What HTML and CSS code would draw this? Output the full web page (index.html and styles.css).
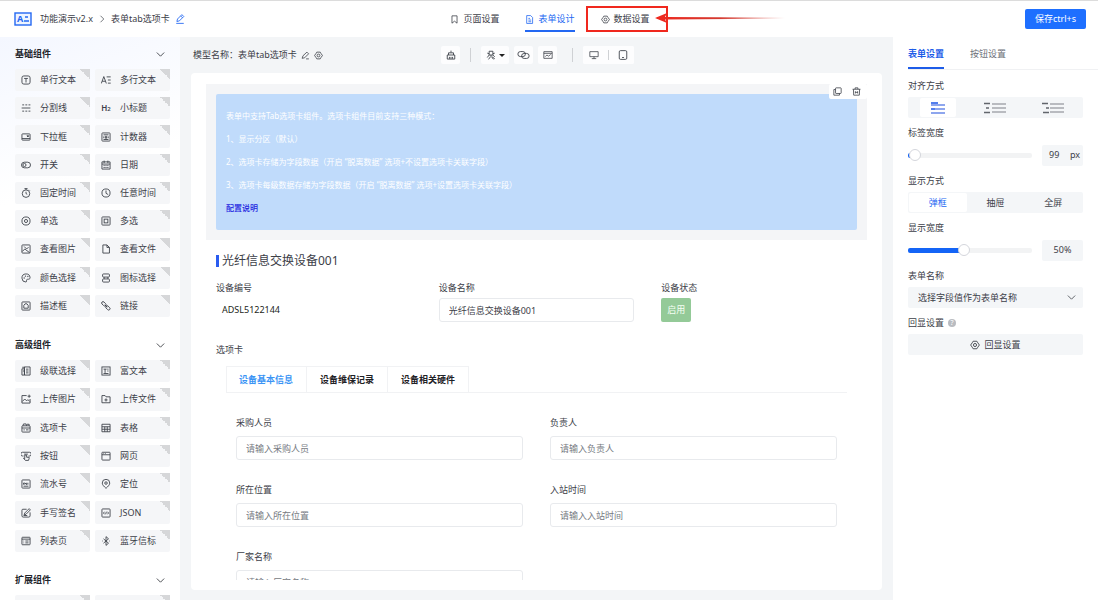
FILE: index.html
```html
<!DOCTYPE html>
<html lang="zh-CN">

<head>
    <meta charset="UTF-8">
    <meta name="viewport" content="width=device-width, initial-scale=1.0">
    <title>表单设计</title>
    <link rel="stylesheet" href="styles.css">
</head>

<body>
    <!-- Icon set -->
    <svg class="sprite" aria-hidden="true">
        <symbol id="i-edit" viewBox="0 0 16 16"><path d="M3 12l1-4 7-7 3 3-7 7-4 1zM9 3l3 3M2 15h12"/></symbol>
        <symbol id="i-pen" viewBox="0 0 16 16"><path d="M2 13l1.500-4.500L10.500 2l3 3-7 7L2 13zM9 14h5"/></symbol>
        <symbol id="i-gear" viewBox="0 0 16 16"><path d="M5 2h6l1.500 2.500L15 8l-2.500 3.500L11 14H5l-1.500-2.500L1 8l2.500-3.500z"/><circle cx="8" cy="8" r="2.500"/></symbol>
        <symbol id="i-bookmark" viewBox="0 0 16 16"><path d="M3.500 1.500h9v13L8 11l-4.500 3.500z"/></symbol>
        <symbol id="i-doc" viewBox="0 0 16 16"><path d="M3 1h7l3.500 3.500V15H3zM6 6h3M6 9h5M6 12h5"/></symbol>
        <symbol id="i-down" viewBox="0 0 16 16"><path d="M1.500 4.500L8 11l6.500-6.500"/></symbol>
        <symbol id="i-right" viewBox="0 0 16 16"><path d="M5 1.500L11.500 8 5 14.500"/></symbol>
        <symbol id="i-text" viewBox="0 0 16 16"><rect x="1.500" y="1.500" width="13" height="13" rx="3"/><path d="M5 5.500h6M8 5.500v6.500"/></symbol>
        <symbol id="i-textarea" viewBox="0 0 16 16"><path d="M0.500 13.500L4.500 2.500l4 11M2 10h5M9 3h6.500M11 8h4.500M11 13h4.500"/></symbol>
        <symbol id="i-divider" viewBox="0 0 16 16"><path d="M1 8h14M2 3h3M7 3h3M12 3h3M2 13h3M7 13h3M12 13h3"/></symbol>
        <symbol id="i-select" viewBox="0 0 16 16"><rect x="1.500" y="3" width="13" height="10" rx="1"/><path d="M1.500 10.500h13M9.500 6l1.500 2 1.500-2z"/></symbol>
        <symbol id="i-counter" viewBox="0 0 16 16"><rect x="1.500" y="1.500" width="13" height="13" rx="1"/><path d="M4 4.500h8M4 12h8M4.500 7v3M7 7h2v3H7zM11.500 7v3"/></symbol>
        <symbol id="i-switch" viewBox="0 0 16 16"><rect x="0.800" y="3.500" width="14.400" height="9" rx="4.500"/><circle cx="5.500" cy="8" r="2.500"/></symbol>
        <symbol id="i-date" viewBox="0 0 16 16"><path d="M1.500 3h13v11.500h-13zM1.500 6.500h13M5 1v4M11 1v4M4 9h2M7 9h2M10 9h2M4 12h2M7 12h2M10 12h2"/></symbol>
        <symbol id="i-timer" viewBox="0 0 16 16"><circle cx="8" cy="9" r="6"/><path d="M8 6v3l2 1M5.500 1h5M8 1v2M13 3l1 1"/></symbol>
        <symbol id="i-clock" viewBox="0 0 16 16"><circle cx="8" cy="8" r="6.500"/><path d="M8 4v4.500l3.500 2"/></symbol>
        <symbol id="i-radio" viewBox="0 0 16 16"><circle cx="8" cy="8" r="6.500"/><circle cx="8" cy="8" r="2.500"/></symbol>
        <symbol id="i-check" viewBox="0 0 16 16"><rect x="1.500" y="1.500" width="13" height="13" rx="1"/><rect x="5" y="5" width="6" height="6"/></symbol>
        <symbol id="i-image" viewBox="0 0 16 16"><rect x="1.500" y="1.500" width="13" height="13" rx="1"/><path d="M2 12l4-4 8 6M5 4l4 4M9 8l3-3"/></symbol>
        <symbol id="i-file" viewBox="0 0 16 16"><path d="M3 1.500h6.500l4 4v9H3zM9.500 1.500v4h4"/></symbol>
        <symbol id="i-color" viewBox="0 0 16 16"><path d="M8 14.500a6.500 6.500 0 1 1 6.500-7c0 2.500-2 2.500-4 2.500-3 0-.5 4.500-2.500 4.500z"/><circle cx="5" cy="8" r=".5"/><circle cx="7" cy="5" r=".5"/><circle cx="11" cy="5.500" r=".5"/></symbol>
        <symbol id="i-iconpick" viewBox="0 0 16 16"><rect x="2.500" y="1.500" width="11" height="5" rx="1.500"/><rect x="2.500" y="9.500" width="11" height="5" rx="1.500"/><path d="M5 6.500v3M11 6.500v3"/></symbol>
        <symbol id="i-desc" viewBox="0 0 16 16"><rect x="1.500" y="1.500" width="13" height="13" rx="1"/><path d="M6.500 4.500h3L11.500 7v4.500h-7V7z"/></symbol>
        <symbol id="i-link" viewBox="0 0 16 16"><rect x="-4" y="-2.200" width="8" height="4.400" rx="2.200" transform="translate(4.500 4.500) rotate(45)"/><rect x="-4" y="-2.200" width="8" height="4.400" rx="2.200" transform="translate(11 11) rotate(45)"/><path d="M6 6l4 4"/></symbol>
        <symbol id="i-cascade" viewBox="0 0 16 16"><path d="M1.500 4.500h4v10h-4zM5.500 1.500h9v13h-9zM2 2h4M8 5h4M8 8h4M8 11h4M3 8h2"/></symbol>
        <symbol id="i-rich" viewBox="0 0 16 16"><rect x="1.500" y="1.500" width="13" height="13"/><path d="M4 5h5M6.500 5v6M4 12h8M10 8h2M10 5h2"/></symbol>
        <symbol id="i-upimg" viewBox="0 0 16 16"><path d="M9 2.500H1.500v12h13V8M2 12l4-4 3 3 2-2 3 3M13 1v5M10.500 3.500h5"/></symbol>
        <symbol id="i-upfile" viewBox="0 0 16 16"><path d="M1.500 2.500h5l1.500 2h6.500v9.500h-13zM8 7v5M5.500 9.500h5"/></symbol>
        <symbol id="i-tabs" viewBox="0 0 16 16"><rect x="1.500" y="4.500" width="13" height="10" rx="1"/><path d="M3 4.500l1-3h4l1 3M9 2h4v2.500M1.500 8h13M4 11h2M8 11h4"/></symbol>
        <symbol id="i-table" viewBox="0 0 16 16"><path d="M1.500 2h13v12h-13zM1.500 6h13M1.500 10h13M6 6v8M10 6v8"/></symbol>
        <symbol id="i-button" viewBox="0 0 16 16"><path d="M4 8H2.500a3 3 0 0 1 0-6h11a3 3 0 0 1 0 6H12M5 5h6M6 12V6.500h3V10h4v2l-1 3H7l-3-3.500z"/></symbol>
        <symbol id="i-web" viewBox="0 0 16 16"><rect x="1.500" y="2" width="13" height="12.500" rx="1"/><path d="M1.500 6h13M4 4h1M7 4h1"/></symbol>
        <symbol id="i-serial" viewBox="0 0 16 16"><rect x="1.500" y="1.500" width="13" height="13" rx="1"/><path d="M4 6v3M6 9V6l3 3V6M11 6v3M4 11.500h8"/></symbol>
        <symbol id="i-pin" viewBox="0 0 16 16"><path d="M8 15c-3-3-6-5.500-6-8.500a6 6 0 0 1 12 0C14 9.500 11 12 8 15z"/><circle cx="8" cy="6.500" r="2"/></symbol>
        <symbol id="i-sign" viewBox="0 0 16 16"><path d="M9 2H3a1.500 1.500 0 0 0-1.500 1.500v9A2 2 0 0 0 3.500 14.500h9a2 2 0 0 0 2-2V7M5 11l1-3 7-7 2 2-7 7zM4 12h6"/></symbol>
        <symbol id="i-json" viewBox="0 0 16 16"><rect x="1.500" y="1.500" width="13" height="13" rx="1"/><path d="M5.500 6L4 8l1.500 2M10.500 6L12 8l-1.500 2M8.500 6l-1 4"/></symbol>
        <symbol id="i-list" viewBox="0 0 16 16"><rect x="1.500" y="2" width="13" height="12" rx="1"/><path d="M1.500 5h13M4 8h1M7 8h5M4 11h1M7 11h5"/></symbol>
        <symbol id="i-bt" viewBox="0 0 16 16"><path d="M4 4.500l8 7-4 3.500V1l4 3.500-8 7M2 8h1M13 8h1"/></symbol>
        <symbol id="i-broom" viewBox="0 0 16 16"><path d="M8 1v3M4 4.500h8v3.500M4 8V4.500M2 8h12v6.500H2zM5.500 11v3M8 11v3M10.500 11v3"/></symbol>
        <symbol id="i-bug" viewBox="0 0 16 16"><path d="M5 2h6v6H5zM2 5l3 1M14 5l-3 1M5 8l-3 4M11 8l3 3M8 8v3M4 15l3-4M12 15l-3-4M10 11l4 3"/></symbol>
        <symbol id="i-chain" viewBox="0 0 20 16"><rect x="1" y="2.500" width="12" height="8" rx="4"/><rect x="7" y="5.500" width="12" height="8" rx="4"/></symbol>
        <symbol id="i-preview" viewBox="0 0 18 16"><path d="M1.500 2h15v12h-15zM1.500 5h15M4 11l3-3 3 2 4-3"/></symbol>
        <symbol id="i-desktop" viewBox="0 0 18 16"><path d="M1.500 2h15v9h-15zM9 11v3.500M5 14.500h8"/></symbol>
        <symbol id="i-phone" viewBox="0 0 16 16"><rect x="2" y="1" width="12" height="14" rx="2"/><path d="M6.500 12h3"/></symbol>
        <symbol id="i-copy" viewBox="0 0 16 16"><rect x="4.500" y="1.500" width="10" height="10" rx="1"/><path d="M11.500 11.500v3h-10v-10h3"/></symbol>
        <symbol id="i-trash" viewBox="0 0 16 16"><path d="M1 4h14M5.500 4V1.500h5V4M2.500 4l.5 10.500h10l.5-10.500M6 7.500v4M10 7.500v4M6 9.500h4"/></symbol>
        <symbol id="i-top" viewBox="0 0 14 12"><path d="M0 1h7M0 7h4" stroke="#1d55e8"/><path d="M0 3h14M4 7h10M0 11h14" stroke="#8ea6ee" stroke-width="2"/></symbol>
        <symbol id="i-left" viewBox="0 0 22 12"><path d="M0 1.500h6M2 6h3M0 10.500h6" stroke="#62666c"/><path d="M8 2h14M8 6h14M8 10h14" stroke="#b9bbc0" stroke-width="2"/></symbol>
        <symbol id="i-end" viewBox="0 0 22 12"><path d="M0 1.500h6M4 6h3M1 10.500h6" stroke="#62666c"/><path d="M8 2h14M8 6h14M8 10h14" stroke="#b9bbc0" stroke-width="2"/></symbol>
    </svg>

    <header class="header">
        <div class="breadcrumb">
            <svg class="logo" viewBox="0 0 18 14"><rect x="1" y="1" width="16" height="12" fill="#eef4ff"/><text class="logo-letter" x="3" y="10">A</text><path d="M11 5h3M10 9h5"/></svg>
            <a href="#">功能演示v2.x</a>
            <svg class="icon icon-sm"><use href="#i-right"/></svg>
            <span>表单tab选项卡</span>
            <button class="icon-btn blue" aria-label="编辑"><svg class="icon"><use href="#i-edit"/></svg></button>
        </div>
        <nav class="nav">
            <button class="nav-item"><svg class="icon icon-md"><use href="#i-bookmark"/></svg>页面设置</button>
            <button class="nav-item active"><svg class="icon icon-md"><use href="#i-doc"/></svg>表单设计</button>
            <div class="marked">
                <button class="nav-item"><svg class="icon icon-md"><use href="#i-gear"/></svg>数据设置</button>
                <svg class="arrow" viewBox="0 0 130 12">
                    <defs>
                        <linearGradient id="fade"><stop offset="0" stop-color="#f0281e"/><stop offset=".5" stop-color="#d43a30"/><stop offset="1" stop-color="#d43a30" stop-opacity="0"/></linearGradient>
                    </defs>
                    <path d="M0 6L12 1 10 5 130 5.500v1L10 7.500l2 3.500z" fill="url(#fade)"/>
                </svg>
            </div>
        </nav>
        <button class="save">保存ctrl+s</button>
    </header>

    <div class="layout">
        <!-- Component library -->
        <aside class="sidebar">
            <h2 class="group-title">基础组件<svg class="icon icon-md"><use href="#i-down"/></svg></h2>
            <div class="components basic">
                <button class="component"><svg class="icon"><use href="#i-text"/></svg>单行文本</button>
                <button class="component"><svg class="icon"><use href="#i-textarea"/></svg>多行文本</button>
                <button class="component"><svg class="icon"><use href="#i-divider"/></svg>分割线</button>
                <button class="component"><span class="text-icon">H<small>2</small></span>小标题</button>
                <button class="component"><svg class="icon"><use href="#i-select"/></svg>下拉框</button>
                <button class="component"><svg class="icon"><use href="#i-counter"/></svg>计数器</button>
                <button class="component"><svg class="icon"><use href="#i-switch"/></svg>开关</button>
                <button class="component"><svg class="icon"><use href="#i-date"/></svg>日期</button>
                <button class="component"><svg class="icon"><use href="#i-timer"/></svg>固定时间</button>
                <button class="component"><svg class="icon"><use href="#i-clock"/></svg>任意时间</button>
                <button class="component"><svg class="icon"><use href="#i-radio"/></svg>单选</button>
                <button class="component"><svg class="icon"><use href="#i-check"/></svg>多选</button>
                <button class="component"><svg class="icon"><use href="#i-image"/></svg>查看图片</button>
                <button class="component"><svg class="icon"><use href="#i-file"/></svg>查看文件</button>
                <button class="component"><svg class="icon"><use href="#i-color"/></svg>颜色选择</button>
                <button class="component"><svg class="icon"><use href="#i-iconpick"/></svg>图标选择</button>
                <button class="component"><svg class="icon"><use href="#i-desc"/></svg>描述框</button>
                <button class="component"><svg class="icon"><use href="#i-link"/></svg>链接</button>
            </div>

            <h2 class="group-title">高级组件<svg class="icon icon-md"><use href="#i-down"/></svg></h2>
            <div class="components advanced">
                <button class="component"><svg class="icon"><use href="#i-cascade"/></svg>级联选择</button>
                <button class="component"><svg class="icon"><use href="#i-rich"/></svg>富文本</button>
                <button class="component"><svg class="icon"><use href="#i-upimg"/></svg>上传图片</button>
                <button class="component"><svg class="icon"><use href="#i-upfile"/></svg>上传文件</button>
                <button class="component"><svg class="icon"><use href="#i-tabs"/></svg>选项卡</button>
                <button class="component"><svg class="icon"><use href="#i-table"/></svg>表格</button>
                <button class="component"><svg class="icon"><use href="#i-button"/></svg>按钮</button>
                <button class="component"><svg class="icon"><use href="#i-web"/></svg>网页</button>
                <button class="component"><svg class="icon"><use href="#i-serial"/></svg>流水号</button>
                <button class="component"><svg class="icon"><use href="#i-pin"/></svg>定位</button>
                <button class="component"><svg class="icon"><use href="#i-sign"/></svg>手写签名</button>
                <button class="component"><svg class="icon"><use href="#i-json"/></svg>JSON</button>
                <button class="component"><svg class="icon"><use href="#i-list"/></svg>列表页</button>
                <button class="component"><svg class="icon"><use href="#i-bt"/></svg>蓝牙信标</button>
            </div>

            <h2 class="group-title">扩展组件<svg class="icon icon-md"><use href="#i-down"/></svg></h2>
            <div class="components">
                <button class="component" aria-label="扩展组件"></button>
                <button class="component" aria-label="扩展组件"></button>
            </div>
        </aside>

        <!-- Form canvas -->
        <main class="main">
            <div class="toolbar">
                <div class="model-name">
                    <span>模型名称：表单tab选项卡</span>
                    <button class="icon-btn" aria-label="重命名"><svg class="icon icon-md"><use href="#i-pen"/></svg></button>
                    <button class="icon-btn" aria-label="设置"><svg class="icon icon-md"><use href="#i-gear"/></svg></button>
                </div>
                <div class="tools">
                    <button class="tool" aria-label="清空"><svg class="icon"><use href="#i-broom"/></svg></button>
                    <span class="line"></span>
                    <div class="tool-set">
                        <button class="tool wide" aria-label="调试"><svg class="icon"><use href="#i-bug"/></svg><span class="caret"></span></button>
                        <button class="tool" aria-label="关联"><svg class="icon icon-w"><use href="#i-chain"/></svg></button>
                        <button class="tool" aria-label="预览"><svg class="icon"><use href="#i-preview"/></svg></button>
                    </div>
                    <span class="line"></span>
                    <div class="devices">
                        <button class="tool" aria-label="电脑"><svg class="icon"><use href="#i-desktop"/></svg></button>
                        <span class="line"></span>
                        <button class="tool" aria-label="手机"><svg class="icon"><use href="#i-phone"/></svg></button>
                    </div>
                </div>
            </div>

            <div class="canvas">
                <div class="canvas-body">
                    <section class="selected">
                        <div class="notice">
                            <p>表单中支持Tab选项卡组件。选项卡组件目前支持三种模式：</p>
                            <p>1、显示分区（默认）</p>
                            <p>2、选项卡存储为字段数据（开启 “脱离数据” 选项+不设置选项卡关联字段）</p>
                            <p>3、选项卡每级数据存储为字段数据（开启 “脱离数据” 选项+设置选项卡关联字段）</p>
                            <p><a href="#">配置说明</a></p>
                        </div>
                        <div class="actions">
                            <button class="icon-btn" aria-label="复制"><svg class="icon icon-md"><use href="#i-copy"/></svg></button>
                            <button class="icon-btn" aria-label="删除"><svg class="icon icon-md"><use href="#i-trash"/></svg></button>
                        </div>
                    </section>

                    <div class="form">
                        <h1 class="form-title">光纤信息交换设备001</h1>
                        <div class="row three">
                            <div class="field">
                                <span class="label">设备编号</span>
                                <span class="code">ADSL5122144</span>
                            </div>
                            <div class="field">
                                <label for="device-name">设备名称</label>
                                <input type="text" id="device-name" value="光纤信息交换设备001">
                            </div>
                            <div class="field">
                                <span class="label">设备状态</span>
                                <span class="tag">启用</span>
                            </div>
                        </div>

                        <span class="label">选项卡</span>
                        <div class="tab-box">
                            <div class="tab-list">
                                <button class="tab active">设备基本信息</button>
                                <button class="tab">设备维保记录</button>
                                <button class="tab">设备相关硬件</button>
                            </div>
                            <div class="row two">
                                <div class="field">
                                    <label for="buyer">采购人员</label>
                                    <input type="text" id="buyer" placeholder="请输入采购人员">
                                </div>
                                <div class="field">
                                    <label for="owner">负责人</label>
                                    <input type="text" id="owner" placeholder="请输入负责人">
                                </div>
                                <div class="field">
                                    <label for="place">所在位置</label>
                                    <input type="text" id="place" placeholder="请输入所在位置">
                                </div>
                                <div class="field">
                                    <label for="time">入站时间</label>
                                    <input type="text" id="time" placeholder="请输入入站时间">
                                </div>
                                <div class="field">
                                    <label for="factory">厂家名称</label>
                                    <input type="text" id="factory" placeholder="请输入厂家名称">
                                </div>
                            </div>
                        </div>
                    </div>
                </div>
            </div>
        </main>

        <!-- Form settings -->
        <aside class="settings">
            <div class="settings-tabs">
                <button class="settings-tab active">表单设置</button>
                <button class="settings-tab">按钮设置</button>
            </div>
            <div class="settings-body">
                <div class="setting">
                    <span class="label">对齐方式</span>
                    <div class="segment align">
                        <button class="active" aria-label="顶部对齐"><svg class="icon-top"><use href="#i-top"/></svg></button>
                        <button aria-label="左对齐"><svg class="icon-align"><use href="#i-left"/></svg></button>
                        <button aria-label="右对齐"><svg class="icon-align"><use href="#i-end"/></svg></button>
                    </div>
                </div>
                <div class="setting">
                    <label for="label-width">标签宽度</label>
                    <div class="slider">
                        <input type="range" id="label-width" min="0" max="100" value="1" style="--fill: 2%">
                        <span class="value split"><span>99</span><span>px</span></span>
                    </div>
                </div>
                <div class="setting">
                    <span class="label">显示方式</span>
                    <div class="segment">
                        <button class="active">弹框</button>
                        <button>抽屉</button>
                        <button>全屏</button>
                    </div>
                </div>
                <div class="setting">
                    <label for="show-width">显示宽度</label>
                    <div class="slider">
                        <input type="range" id="show-width" min="10" max="100" value="50" style="--fill: 44%">
                        <span class="value">50%</span>
                    </div>
                </div>
                <div class="setting">
                    <label for="form-name">表单名称</label>
                    <div class="select">
                        <select id="form-name">
                            <option>选择字段值作为表单名称</option>
                        </select>
                        <svg class="icon icon-md"><use href="#i-down"/></svg>
                    </div>
                </div>
                <div class="setting">
                    <span class="label">回显设置<span class="help">?</span></span>
                    <button class="echo"><svg class="icon"><use href="#i-gear"/></svg>回显设置</button>
                </div>
            </div>
        </aside>
    </div>
</body>

</html>
```

FILE: styles.css
```css
* {
    box-sizing: border-box;
}

body {
    margin: 0;
    height: 100vh;
    display: flex;
    flex-direction: column;
    overflow: hidden;
    border-top: 1px solid #dcdcdc;
    background: #fff;
    color: #3c4048;
    font-family: "Noto Sans", "Noto Sans CJK SC", sans-serif;
    font-size: 9px;
    line-height: 14px;
}

h1,
h2,
p {
    margin: 0;
}

a {
    color: inherit;
    text-decoration: none;
}

button,
input,
select {
    font: inherit;
    color: inherit;
}

button {
    padding: 0;
    border: 0;
    background: none;
    white-space: nowrap;
    cursor: pointer;
}

.sprite {
    position: absolute;
    width: 0;
    height: 0;
}

svg {
    display: block;
    flex: none;
    fill: none;
    stroke: currentColor;
    stroke-width: 1.4;
}

.icon {
    width: 10px;
    height: 10px;
}

.icon-md {
    width: 9px;
    height: 9px;
}

.icon-sm {
    width: 8px;
    height: 8px;
}

.icon-w {
    width: 13px;
}

.icon-btn {
    display: flex;
}

.blue {
    color: #2468f2;
}

/* Header */
.header {
    flex: none;
    display: grid;
    grid-template-columns: 1fr auto 1fr;
    align-items: center;
    height: 36px;
    padding: 0 12px 0 14px;
}

.breadcrumb {
    display: flex;
    align-items: center;
    gap: 5px;
}

.logo {
    width: 18px;
    height: 14px;
    margin-right: 3px;
    color: #2468f2;
}

.logo-letter {
    fill: currentColor;
    stroke: none;
    font-size: 9px;
    font-weight: 700;
}

.nav {
    display: flex;
    gap: 26px;
}

.nav-item {
    display: flex;
    align-items: center;
    gap: 4px;
    height: 26px;
    border: 2px solid transparent;
    border-width: 2px 0;
}

.nav-item.active {
    color: #2468f2;
    border-bottom-color: #2468f2;
}

/* Red highlight round the data tab */
.marked {
    position: relative;
}

.marked::before {
    content: "";
    position: absolute;
    inset: 0 -18px 0 -15px;
    border: 2px solid #f0281e;
    pointer-events: none;
}

.arrow {
    position: absolute;
    left: 54px;
    top: 6px;
    width: 130px;
    height: 12px;
    stroke: none;
}

.save {
    justify-self: end;
    width: 61px;
    height: 20px;
    border-radius: 2px;
    background: #1e6fff;
    color: #fff;
}

.layout {
    flex: 1;
    min-height: 0;
    display: flex;
}

/* Sidebar */
.sidebar {
    flex: none;
    width: 180px;
    padding: 0 10px 0 15px;
    overflow: hidden;
    background: linear-gradient(160deg, #f4f7ff, #fff 160px);
}

.group-title {
    display: flex;
    align-items: center;
    justify-content: space-between;
    height: 32px;
    padding: 2px 5px 0 0;
    font-size: 9px;
    font-weight: 600;
    color: #22252b;
}

.components {
    display: grid;
    grid-template-columns: 1fr 1fr;
    gap: 6px 5px;
    margin-bottom: 11px;
}

.basic {
    min-height: 248px;
}

.advanced {
    min-height: 192px;
}

.component {
    position: relative;
    display: flex;
    align-items: center;
    gap: 9px;
    min-height: 22px;
    padding-left: 6px;
    border-radius: 2px;
    background: #f5f6f8;
}

.component::after {
    content: "";
    position: absolute;
    top: 0;
    right: 0;
    width: 10px;
    height: 10px;
    background: linear-gradient(to top right, transparent 50%, #d6d7d9 50%);
}

.text-icon {
    width: 10px;
    font-size: 8px;
    font-weight: 600;
}

.text-icon small {
    font-size: 6px;
}

/* Main area */
.main {
    flex: 1;
    min-width: 0;
    display: flex;
    flex-direction: column;
    padding: 0 11px 10px;
    background: #f3f5f7;
}

.toolbar {
    flex: none;
    display: grid;
    grid-template-columns: 1fr auto 1fr;
    align-items: center;
    height: 36px;
    padding-left: 2px;
}

.model-name {
    display: flex;
    align-items: center;
    gap: 4px;
}

.tools,
.tool-set,
.devices {
    display: flex;
    align-items: center;
}

.tools {
    gap: 10px;
}

.tool-set {
    gap: 5px;
    margin-right: 5px;
}

.tool {
    display: flex;
    align-items: center;
    justify-content: center;
    gap: 3px;
    width: 19px;
    height: 18px;
    border-radius: 2px;
    background: #fdfdfe;
}

.tool.wide {
    width: 28px;
}

.devices {
    gap: 3px;
    border-radius: 2px;
    background: #fdfdfe;
}

.devices .tool {
    width: 22px;
}

.line {
    width: 1px;
    height: 14px;
    background: #cfd1d4;
}

.devices .line {
    height: 10px;
}

.caret {
    border: 3px solid transparent;
    border-top-color: #222;
    border-bottom: 0;
}

.canvas {
    flex: 1;
    min-height: 0;
    display: flex;
    padding: 11px 15px 10px;
    border-radius: 4px;
    background: #fff;
}

.canvas-body {
    flex: 1;
    min-width: 0;
    overflow: hidden;
}

.selected {
    position: relative;
    padding: 10px;
    background: #f4f5f7;
}

.notice {
    padding: 10px 10px 11px;
    border-radius: 2px;
    background: #c0dbfb;
    color: #fff;
    font-size: 8px;
    line-height: 23px;
}

.notice a {
    color: #1c22e0;
    font-weight: 500;
}

.actions {
    position: absolute;
    top: 0;
    right: 0;
    display: flex;
    gap: 10px;
    padding: 3px 6px 3px 4px;
    border-radius: 2px;
    background: #fff;
}

.form {
    padding: 13px 10px 0;
}

.form-title {
    display: flex;
    align-items: center;
    gap: 3px;
    margin-bottom: 12px;
    font-size: 12px;
    font-weight: 400;
    line-height: 16px;
}

.form-title::before {
    content: "";
    width: 3px;
    height: 12px;
    background: #2a5cf0;
}

.row {
    display: grid;
}

.three {
    grid-template-columns: repeat(3, 1fr);
    gap: 27px;
    margin-bottom: 21px;
}

.two {
    grid-template-columns: 1fr 1fr;
    gap: 23px 27px;
    padding: 23px 10px 0;
}

.field {
    display: flex;
    flex-direction: column;
    align-items: flex-start;
    gap: 3px;
}

.two .field {
    gap: 6px;
}

.label {
    display: flex;
    align-items: center;
}

.field input {
    width: 100%;
    height: 24px;
    padding: 0 9px;
    border: 1px solid #e8eaed;
    border-radius: 3px;
    background: #fff;
    outline: none;
}

.field input::placeholder {
    color: #767a82;
}

.code {
    padding-left: 6px;
    color: #22251a;
    line-height: 24px;
}

.tag {
    padding: 0 6px;
    border-radius: 2px;
    background: #94ca98;
    color: #f4fff4;
    line-height: 24px;
}

.tab-box {
    padding: 9px 10px 0;
}

.tab-list {
    display: flex;
    border-bottom: 1px solid #f1f2f4;
}

.tab {
    height: 26px;
    padding: 0 13px;
    border: 1px solid #f1f2f4;
    border-width: 1px 1px 0 0;
    color: #1f2226;
    font-weight: 600;
}

.tab:first-child {
    padding-left: 12px;
    border-left-width: 1px;
}

.tab.active {
    color: #3a94f5;
}

/* Settings panel */
.settings {
    flex: none;
    width: 205px;
    padding-left: 15px;
    background: #fff;
}

.settings-tabs {
    display: flex;
    gap: 26px;
    border-bottom: 1px solid #f0f1f3;
}

.settings-tab {
    height: 32px;
    padding-top: 4px;
    border-bottom: 2px solid transparent;
    color: #6c7078;
}

.settings-tab.active {
    border-bottom-color: #1d5ce8;
    color: #1d5ce8;
    font-weight: 600;
}

.settings-body {
    display: flex;
    flex-direction: column;
    gap: 8px;
    padding: 9px 15px 0 0;
}

.setting {
    display: flex;
    flex-direction: column;
    gap: 4px;
}

.segment {
    display: grid;
    grid-template-columns: repeat(3, 1fr);
    height: 21px;
    padding: 1px;
    border-radius: 2px;
    background: #f4f6f8;
}

.segment button {
    display: flex;
    align-items: center;
    justify-content: center;
    border-radius: 2px;
}

.segment .active {
    background: #fff;
    color: #2468f2;
}

.align .active {
    margin: 0 11px;
}

.icon-top {
    width: 14px;
    height: 12px;
}

.icon-align {
    width: 22px;
    height: 12px;
}

.slider {
    display: flex;
    align-items: center;
    gap: 10px;
    height: 22px;
}

.slider input {
    flex: 1;
    min-width: 0;
    height: 12px;
    margin: 0;
    appearance: none;
    background: none;
}

.slider input::-webkit-slider-runnable-track {
    height: 5px;
    border-radius: 2px;
    background: linear-gradient(to right, #1464f6 var(--fill), #f2f3f4 var(--fill));
}

.slider input::-webkit-slider-thumb {
    appearance: none;
    width: 12px;
    height: 12px;
    margin-top: -4px;
    border: 1px solid #d4d6dc;
    border-radius: 50%;
    background: #fff;
}

.value {
    display: flex;
    align-items: center;
    justify-content: center;
    width: 41px;
    height: 21px;
    border-radius: 2px;
    background: #f4f6f8;
}

.split {
    justify-content: space-between;
    padding: 0 3px 0 7px;
}

.select {
    position: relative;
    display: flex;
}

.select select {
    width: 100%;
    height: 21px;
    padding: 0 10px;
    border: 0;
    border-radius: 2px;
    appearance: none;
    background: #f4f6f8;
}

.select svg {
    position: absolute;
    top: 6px;
    right: 7px;
    pointer-events: none;
}

.help {
    width: 8px;
    height: 8px;
    margin-left: 4px;
    border-radius: 50%;
    background: #b9bcc1;
    color: #fff;
    font-size: 7px;
    line-height: 8px;
    text-align: center;
}

.echo {
    display: flex;
    align-items: center;
    justify-content: center;
    gap: 4px;
    height: 21px;
    border-radius: 2px;
    background: #f4f6f8;
}
```
